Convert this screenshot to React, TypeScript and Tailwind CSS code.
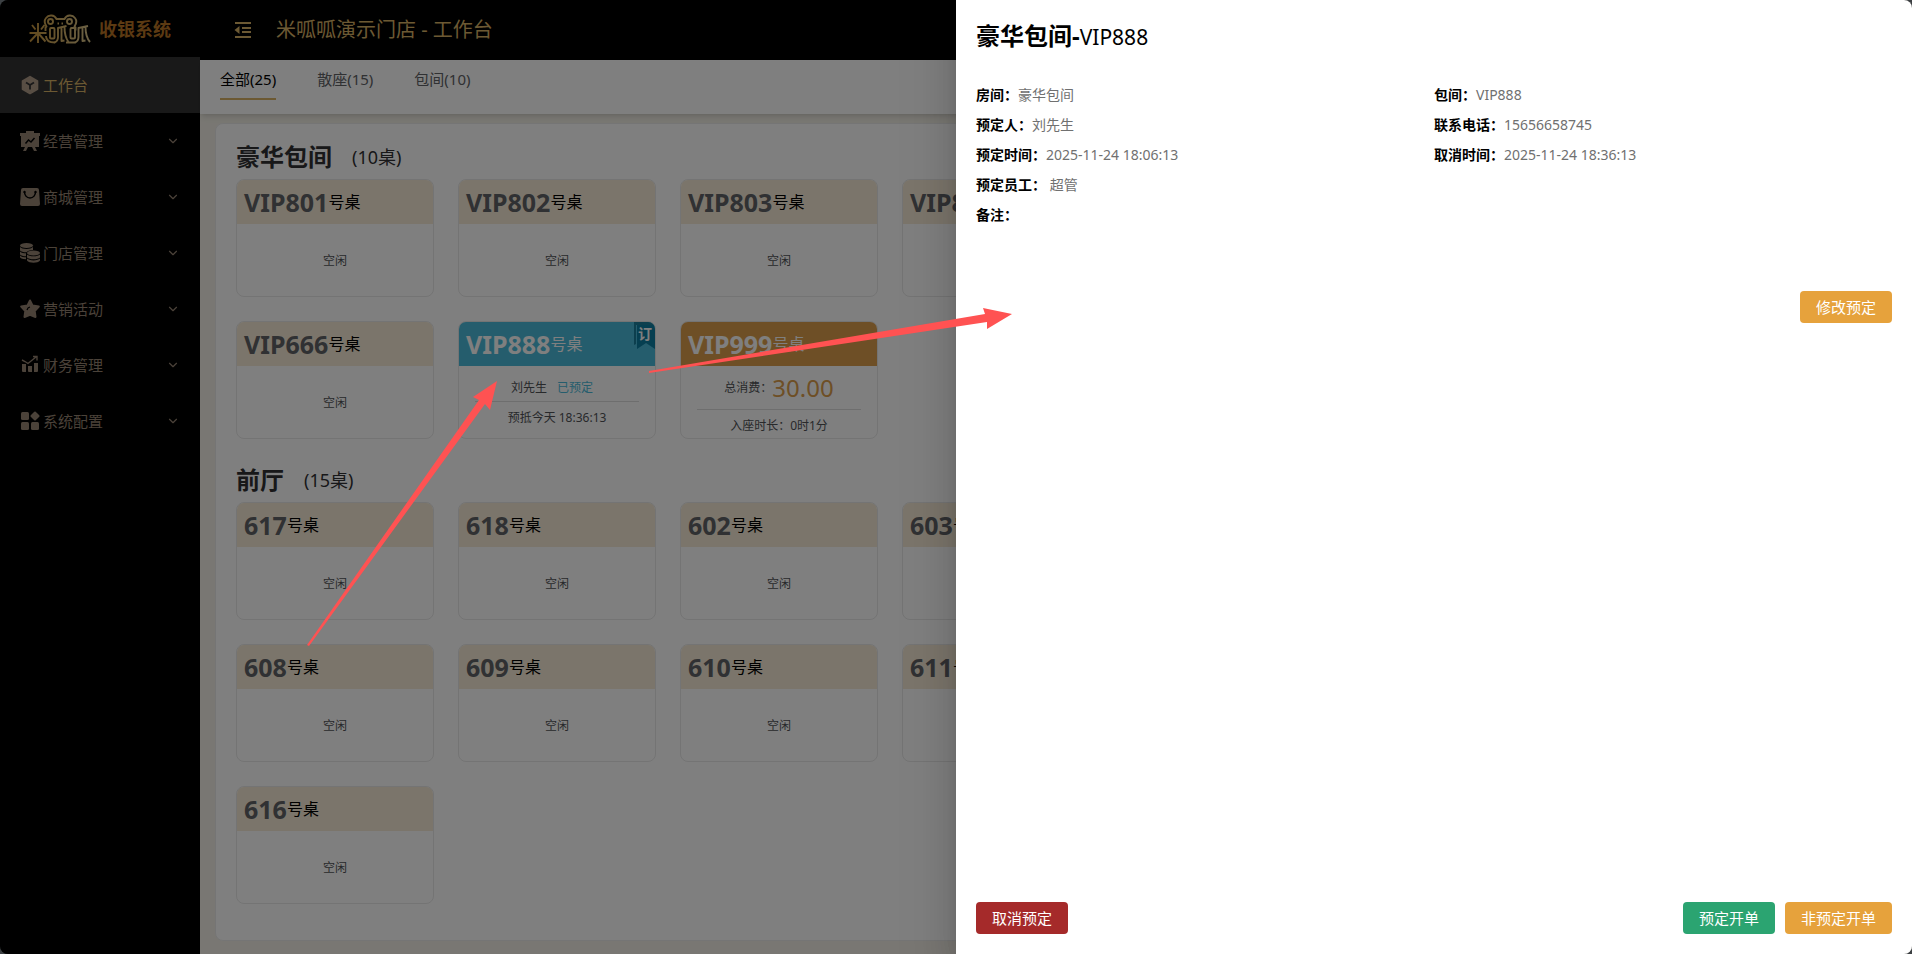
import { useState } from 'react';
import { ChevronDown } from 'lucide-react';

interface TableInfo {
  name: string;
  status: 'free' | 'booked' | 'busy';
}

interface RoomGroup {
  name: string;
  count: number;
  tables: TableInfo[];
}

const free = (name: string): TableInfo => ({ name, status: 'free' });

const groups: RoomGroup[] = [
  {
    name: '豪华包间',
    count: 10,
    tables: [
      free('VIP801'),
      free('VIP802'),
      free('VIP803'),
      free('VIP805'),
      free('VIP806'),
      free('VIP808'),
      free('VIP555'),
      free('VIP666'),
      { name: 'VIP888', status: 'booked' },
      { name: 'VIP999', status: 'busy' },
    ],
  },
  {
    name: '前厅',
    count: 15,
    tables: ['617', '618', '602', '603', '605', '606', '607', '608', '609', '610', '611', '612', '613', '615', '616'].map(free),
  },
];

const tabs = ['全部(25)', '散座(15)', '包间(10)'];

const bookingInfo = [
  { label: '房间：', value: '豪华包间' },
  { label: '包间：', value: 'VIP888' },
  { label: '预定人：', value: '刘先生' },
  { label: '联系电话：', value: '15656658745' },
  { label: '预定时间：', value: '2025-11-24 18:06:13' },
  { label: '取消时间：', value: '2025-11-24 18:36:13' },
  { label: '预定员工：', value: '\u00a0超管' },
];

const menus = [
  {
    label: '经营管理',
    icon: (
      <>
        <path d="M6 0h8v2h6v3H0V2h6z" />
        <path d="M1 5h18v11H1z" />
        <path d="m5.500 12.500 3-3.500 2.500 2 3.500-4" fill="none" stroke="#000" strokeWidth="1.500" />
        <path d="m5 16-2 4h3l2-4zm10 0 2 4h-3l-2-4z" />
      </>
    ),
  },
  {
    label: '商城管理',
    icon: (
      <>
        <path d="M3 1h14a2 2 0 0 1 2 2l1 14a2 2 0 0 1-2 2H2a2 2 0 0 1-2-2L1 3a2 2 0 0 1 2-2z" />
        <path d="M4.500 5c0 3 2 6 5.500 6s5.500-3 5.500-6" fill="none" stroke="#000" strokeWidth="1.500" />
        <circle cx="4.500" cy="5" r="1.200" fill="#000" />
        <circle cx="15.500" cy="5" r="1.200" fill="#000" />
      </>
    ),
  },
  {
    label: '门店管理',
    icon: (
      <>
        <ellipse cx="6.500" cy="2.500" rx="6.500" ry="2.500" />
        <path d="M0 4c2 2.500 11 2.500 13 0v3c-3 0-6 1-6.500 2.300C3 9.300 1 8.500 0 7.500zM0 8.500c1.500 1.500 4 1.800 6 1.800v2.900c-3 0-5-.7-6-1.800zM0 12.400c1.500 1.500 4 1.800 6 1.800v2c-4 0-6-1-6-2.200z" />
        <ellipse cx="13.500" cy="10" rx="6.500" ry="2.400" />
        <path d="M7 11.400c2 2.400 11 2.400 13 0v3c-2 2.400-11 2.400-13 0zM7 15.600c2 2.400 11 2.400 13 0v2c-2 3-11 3-13 0z" />
      </>
    ),
  },
  {
    label: '营销活动',
    icon: (
      <>
        <path d="M10 1.500 12.500 6.500 18.800 7.600 14.700 12 15.500 18 10 15.800 4.500 18 5.300 12 1.200 7.600 7.500 6.500z" stroke="#968473" strokeWidth="2" strokeLinejoin="round" />
        <path d="M7 11c.5-1.800 1.500-2.700 3-3" fill="none" stroke="#000" strokeWidth="1.200" />
      </>
    ),
  },
  {
    label: '财务管理',
    icon: (
      <>
        <path d="M2 9h4v8H3a1 1 0 0 1-1-1zM8 11h4v6H9a1 1 0 0 1-1-1zM14 8h4v8a1 1 0 0 1-1 1h-3z" />
        <path d="m2 5 3 1.500 3 2L16 2M13 1.500h4v4" fill="none" stroke="#968473" strokeWidth="1.400" />
      </>
    ),
  },
  {
    label: '系统配置',
    icon: (
      <>
        <rect x="1" y="1" width="8" height="8" rx="1.500" />
        <rect x="1" y="11" width="8" height="8" rx="1.500" />
        <rect x="11" y="11" width="8" height="8" rx="1.500" />
        <rect x="11.500" y="1.500" width="7" height="7" rx="1" transform="rotate(45 15 5)" />
      </>
    ),
  },
];

const Logo = () => (
  <svg width="64" height="32" viewBox="0 0 64 32" fill="none" strokeWidth="1.900" className="shrink-0" aria-hidden="true">
    <defs>
      <linearGradient id="gold" x1="0" y1="0" x2="64" y2="0" gradientUnits="userSpaceOnUse">
        <stop offset="0" stopColor="#c49239" />
        <stop offset="1" stopColor="#d8c48c" />
      </linearGradient>
    </defs>
    <g stroke="url(#gold)" strokeLinejoin="round">
      {/* 米 */}
      <path d="M10 10v20M1.500 20h17M4 12l3.500 4.500M16.500 12 13 16.500M9.500 20.500l-7.500 8M10.500 20.500l7 8" />
      {/* frog head and eyes */}
      <path d="M17.500 18v-3.500l1-1c-2-3-2.500-6-.5-8.500 2.500-3.500 8.500-3.500 10.500 1h8c2-4.500 8-4.500 10.500-1 2 2.500 1.500 5.500-.5 8.500l1 1v3" />
      <circle cx="22.500" cy="8.500" r="2.500" />
      <circle cx="41.500" cy="8.500" r="2.500" />
      <path d="M29.500 10.500h1.500M33.500 10.500h1.500" />
      {/* 呱呱 */}
      <rect x="22" y="15" width="4.500" height="10.500" rx="1" />
      <path d="M38.500 13 30 15v9c0 3-1 4.500-3.500 5.500M33.500 14.500V28l3-.5M36.500 14c0 7 1 11 4 15" />
      <rect x="42.500" y="15" width="4.500" height="10.500" rx="1" />
      <path d="M60 13l-9.500 2v9c0 3-1 4.500-3.500 5.500M54.500 14.500V28l3-.5M57.500 14c0 7 1 11 4.500 15" />
      <path d="M18 23c0 4 3 6.500 9 6.500M38 29.500h9.500" />
    </g>
  </svg>
);

const SideBar = () => (
  <aside className="w-50 shrink-0 bg-black text-[#968473]">
    <div className="flex h-[57px] items-center gap-[7px] pl-7">
      <Logo />
      <span className="text-lg font-bold text-[#b87425]">收银系统</span>
    </div>
    <nav className="text-[15px]">
      <a href="#workbench" className="flex h-14 items-center gap-[3px] bg-[#333] px-5 text-[#d8b267]">
        <svg width="20" height="20" viewBox="0 0 20 20" className="text-[#b09c88]" fill="currentColor" aria-hidden="true">
          <path d="M10 1.800 17.300 6v8.200L10 18.300 2.700 14.200V6z" stroke="currentColor" strokeWidth="2" strokeLinejoin="round" />
          <path d="M6 7.500l4 2.500 4-2.500M10 10v4.500" fill="none" stroke="#333" strokeWidth="1.800" />
        </svg>
        工作台
      </a>
      {menus.map((menu) => (
        <button key={menu.label} className="flex h-14 w-full items-center gap-[3px] px-5">
          <svg width="20" height="20" viewBox="0 0 20 20" fill="currentColor" aria-hidden="true">
            {menu.icon}
          </svg>
          {menu.label}
          <ChevronDown size={14} strokeWidth={2} className="ml-auto" />
        </button>
      ))}
    </nav>
  </aside>
);

const headStyle = {
  free: 'bg-[#f7ebd6] text-black',
  booked: 'bg-[#4abada] text-white',
  busy: 'bg-[#dc9e4c] text-white',
};

const TableCard = ({ name, status }: TableInfo) => (
  <article className="relative flex h-[118px] flex-col overflow-hidden rounded-lg border border-[#e8e8e8] bg-white text-xs text-[#505256]">
    <header className={`-mx-px -mt-px flex h-[45px] shrink-0 items-center px-2 ${headStyle[status]}`}>
      <strong className={`text-[25px] leading-8 ${status === 'free' ? 'text-[#606266]' : ''}`}>{name}</strong>
      <span className="text-base leading-8">号桌</span>
    </header>
    {status === 'free' && <p className="flex flex-1 items-center justify-center pt-[2px]">空闲</p>}
    {status === 'booked' && (
      <>
        <div className="absolute top-0 right-0">
          <svg width="21" height="27" viewBox="0 0 21 27" aria-hidden="true">
            <path d="M0 0h21v3H2v19l-2 1z" fill="#1a7f9d" />
            <path d="M3 3h18v24l-9-6-9 6z" fill="#0c7fa2" />
          </svg>
          <span className="absolute top-1 left-1 text-sm leading-4 font-bold text-white">订</span>
        </div>
        <div className="mx-4 mt-2 flex h-7 items-center justify-center gap-[10px] border-b border-[#dcdcdc] pr-[10px]">
          <span>刘先生</span>
          <span className="text-[#4abada]">已预定</span>
        </div>
        <p className="mt-1 text-center leading-6">预抵今天 18:36:13</p>
      </>
    )}
    {status === 'busy' && (
      <>
        <div className="mx-4 flex h-11 items-center justify-center border-b border-[#dcdcdc]">
          <span>总消费：</span>
          <span className="text-2xl text-[#dc9e4c]">30.00</span>
        </div>
        <p className="mt-1 text-center leading-6">入座时长：0时1分</p>
      </>
    )}
  </article>
);

const Workbench = () => {
  const [tab, setTab] = useState(tabs[0]);

  return (
    <div className="flex min-w-0 flex-1 flex-col bg-[#f2efe6]">
      <header className="flex h-15 shrink-0 items-center gap-[22px] bg-black pl-8 text-xl text-[#d8b267]">
        <button aria-label="收起菜单">
          <svg width="22" height="20" viewBox="0 0 22 20" fill="currentColor" aria-hidden="true">
            <path d="M3 2h16v2H3zM10 7h9v2h-9zM10 11h9v2h-9zM3 16h16v2H3zM2.500 10 7.500 6v8z" />
          </svg>
        </button>
        <h1>米呱呱演示门店 - 工作台</h1>
      </header>
      <div className="flex h-[54px] shrink-0 items-start gap-[41px] bg-white px-5 pt-1 text-[15px] shadow-md">
        {tabs.map((item) => (
          <button
            key={item}
            onClick={() => setTab(item)}
            className={`h-9 border-b-2 pb-1 leading-[30px] ${
              tab === item ? 'border-[#d8b267] text-black' : 'border-transparent text-[#606266]'
            }`}
          >
            {item}
          </button>
        ))}
      </div>
      <main className="mx-[15px] mt-[9px] mb-[13px] flex-1 overflow-hidden rounded-lg border border-[#ebebeb] bg-white px-5 pt-[11px]">
        {groups.map((group) => (
          <section key={group.name} className="mb-[19px]">
            <h2 className="flex h-11 items-center gap-5 text-lg text-[#303133]">
              <strong className="text-2xl">{group.name}</strong>({group.count}桌)
            </h2>
            <div className="grid grid-cols-[repeat(auto-fill,198px)] gap-6">
              {group.tables.map((table) => (
                <TableCard key={table.name} {...table} />
              ))}
            </div>
          </section>
        ))}
      </main>
    </div>
  );
};

const buttonBase = 'h-8 rounded px-4 text-[15px] leading-8 text-white';

const BookingDrawer = () => (
  <aside
    role="dialog"
    aria-label="豪华包间-VIP888"
    className="absolute inset-y-0 right-0 flex w-1/2 flex-col bg-white p-5 shadow-[0_16px_48px_16px_rgba(0,0,0,0.08),0_12px_32px_rgba(0,0,0,0.12),0_8px_16px_-8px_rgba(0,0,0,0.16)]"
  >
    <h2 className="text-[21px] leading-8">
      <strong className="text-2xl leading-8">豪华包间-</strong>VIP888
    </h2>
    <dl className="mt-[27px] grid grid-cols-[458px_1fr] text-sm leading-[30px]">
      {bookingInfo.map((item) => (
        <div key={item.label} className="flex">
          <dt className="font-bold text-black">{item.label}</dt>
          <dd className="text-[#707070]">{item.value}</dd>
        </div>
      ))}
      <div className="col-start-1 flex">
        <dt className="font-bold text-black">备注：</dt>
        <dd />
      </div>
    </dl>
    <button className={`${buttonBase} mt-[61px] self-end bg-[#e6a23c]`}>修改预定</button>
    <footer className="mt-auto flex gap-[10px]">
      <button className={`${buttonBase} mr-auto bg-[#a52a2a]`}>取消预定</button>
      <button className={`${buttonBase} bg-[#2ba471]`}>预定开单</button>
      <button className={`${buttonBase} bg-[#e6a23c]`}>非预定开单</button>
    </footer>
  </aside>
);

// Guide arrows drawn over the page and the drawer
const GuideArrows = () => (
  <svg width="1912" height="954" viewBox="0 0 1912 954" fill="#ff5252" className="pointer-events-none absolute top-0 left-0" aria-hidden="true">
    <path d="M307 645 479 400 473 397 497 381 490 410 485 404 309 646z" />
    <path d="M649 371 985 314 983 308 1012 314 987 329 987 322 649 373z" />
  </svg>
);

const App = () => (
  <div className="h-screen bg-[#3c4043] font-['Noto_Sans','Noto_Sans_CJK_SC',sans-serif]">
    <div className="relative flex h-full overflow-hidden rounded-lg">
      <SideBar />
      <Workbench />
      <div className="absolute inset-0 bg-black/50" />
      <BookingDrawer />
      <GuideArrows />
    </div>
  </div>
);

export default App;
